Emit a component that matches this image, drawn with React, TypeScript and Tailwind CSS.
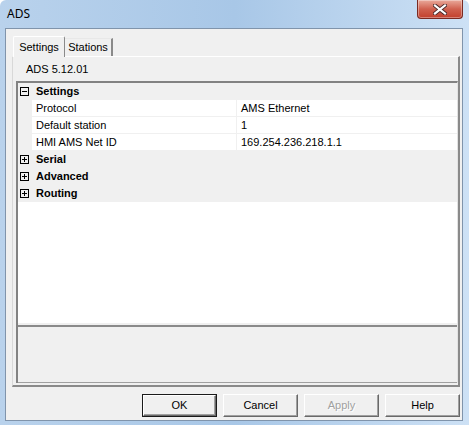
import React from 'react';

type Row =
  | { kind: 'cat'; label: string; open: boolean }
  | { kind: 'prop'; name: string; value: string };

const rows: Row[] = [
  { kind: 'cat', label: 'Settings', open: true },
  { kind: 'prop', name: 'Protocol', value: 'AMS Ethernet' },
  { kind: 'prop', name: 'Default station', value: '1' },
  { kind: 'prop', name: 'HMI AMS Net ID', value: '169.254.236.218.1.1' },
  { kind: 'cat', label: 'Serial', open: false },
  { kind: 'cat', label: 'Advanced', open: false },
  { kind: 'cat', label: 'Routing', open: false },
];

const ExpandBox = ({ open }: { open: boolean }) => (
  <svg width="9" height="9" viewBox="0 0 9 9" className="shrink-0">
    <rect x="0.5" y="0.5" width="8" height="8" fill="none" stroke="#000" />
    <path d="M2 4.5h5" stroke="#000" />
    {!open && <path d="M4.5 2v5" stroke="#000" />}
  </svg>
);

const CloseButton = () => (
  <div className="absolute top-0 right-[6px] w-[46px] h-[19px] rounded-b-[4px] border border-t-0 border-[#7a2a22] bg-gradient-to-b from-[#e9a99b] via-[#d0614f] to-[#c23f2c] shadow-[inset_0_0_0_1px_rgba(255,255,255,0.35)] flex items-center justify-center">
    <svg width="14" height="11" viewBox="0 0 14 11">
      <path d="M2 1.5l10 8M12 1.5l-10 8" stroke="#4a2a2a" strokeWidth="4" strokeLinecap="square" />
      <path d="M2 1.5l10 8M12 1.5l-10 8" stroke="#ffffff" strokeWidth="2.2" strokeLinecap="square" />
    </svg>
  </div>
);

const DialogButton = ({ label, isDefault, disabled }: { label: string; isDefault?: boolean; disabled?: boolean }) => (
  <div
    className={
      'w-[75px] h-[23px] flex items-center justify-center bg-[#f0f0f0] text-[11px] ' +
      (isDefault ? 'border border-[#1a1a1a] ' : 'border border-t-white border-l-white border-r-[#696969] border-b-[#696969] ')
    }
  >
    <div
      className={
        'w-full h-full flex items-center justify-center ' +
        (isDefault
          ? 'border border-t-white border-l-white border-r-[#696969] border-b-[#696969] shadow-[inset_-1px_-1px_0_#a0a0a0]'
          : 'shadow-[inset_-1px_-1px_0_#a0a0a0]')
      }
    >
      <span className={disabled ? 'text-[#a0a0a0] [text-shadow:1px_1px_0_#ffffff]' : 'text-black'}>{label}</span>
    </div>
  </div>
);

export default function App() {
  return (
    <div
      className="w-[469px] h-[425px] relative flex flex-col rounded-t-[6px] overflow-hidden bg-gradient-to-r from-[#b9d2ec] via-[#a8c7e7] to-[#cde1f5]"
      style={{ fontFamily: '"Liberation Sans", Arial, sans-serif' }}
    >
      <div className="h-[28px] shrink-0 flex items-center pl-[7px] pb-[1px] text-[12px] text-black" style={{ fontFamily: '"Noto Sans", "Liberation Sans", sans-serif' }}>
        ADS
      </div>
      <CloseButton />

      {/* client area */}
      <div className="flex-1 ml-[5px] mr-[6px] mb-[4px] border border-[#8094ab] bg-[#f0f0f0] flex flex-col pl-[6px] pr-[2px] pt-[7px] pb-[3px] text-[11px] text-black">
        {/* tabs */}
        <div className="h-[20px] flex items-end pl-[1px] relative z-10">
          <div className="w-[52px] h-[21px] -mb-[1px] bg-[#f0f0f0] border-t border-l border-white border-r border-r-[#8a8a8a] rounded-t-[2px] flex items-start justify-center pt-[2px]">
            Settings
          </div>
          <div className="w-[48px] h-[18px] bg-[#f0f0f0] border-t border-t-[#e8e8e8] border-r-2 border-r-[#8a8a8a] flex items-center justify-center pb-[1px]">
            Stations
          </div>
        </div>

        {/* tab page */}
        <div className="h-[331px] shrink-0 border-t border-l border-t-white border-l-[#d8d8d8] border-r-2 border-b-2 border-r-[#8a8a8a] border-b-[#8a8a8a] flex flex-col">
          <div className="h-[24px] shrink-0 flex items-center pl-[13px]">ADS 5.12.01</div>

          {/* property grid */}
          <div className="flex-1 ml-[3px] mb-[2px] flex flex-col border-t-2 border-l-2 border-t-[#828282] border-l-[#828282] border-r border-r-[#e3e3e3]">
            <div className="flex-1 bg-white flex flex-col">
              {rows.map((r, i) =>
                r.kind === 'cat' ? (
                  <div key={i} className="h-[17px] flex items-center bg-[#f0f0f0] pl-[2px]">
                    <ExpandBox open={r.open} />
                    <span className="ml-[7px] font-bold">{r.label}</span>
                  </div>
                ) : (
                  <div key={i} className="h-[17px] flex border-b border-[#f0f0f0]">
                    <div className="w-[14px] shrink-0 bg-[#f0f0f0]" />
                    <div className="w-[205px] shrink-0 pl-[4px] flex items-center border-r border-[#f0f0f0]">{r.name}</div>
                    <div className="flex-1 pl-[4px] flex items-center">{r.value}</div>
                  </div>
                )
              )}
            </div>
            <div className="h-[2px] shrink-0 bg-[#f0f0f0]" />
            <div className="h-[58px] shrink-0 border-t-2 border-t-[#8a8a8a] border-b border-b-[#a0a0a0] bg-[#f0f0f0]" />
          </div>
        </div>

        {/* buttons */}
        <div className="mt-[7px] flex justify-end gap-[6px]">
          <DialogButton label="OK" isDefault />
          <DialogButton label="Cancel" />
          <DialogButton label="Apply" disabled />
          <DialogButton label="Help" />
        </div>
      </div>
    </div>
  );
}
